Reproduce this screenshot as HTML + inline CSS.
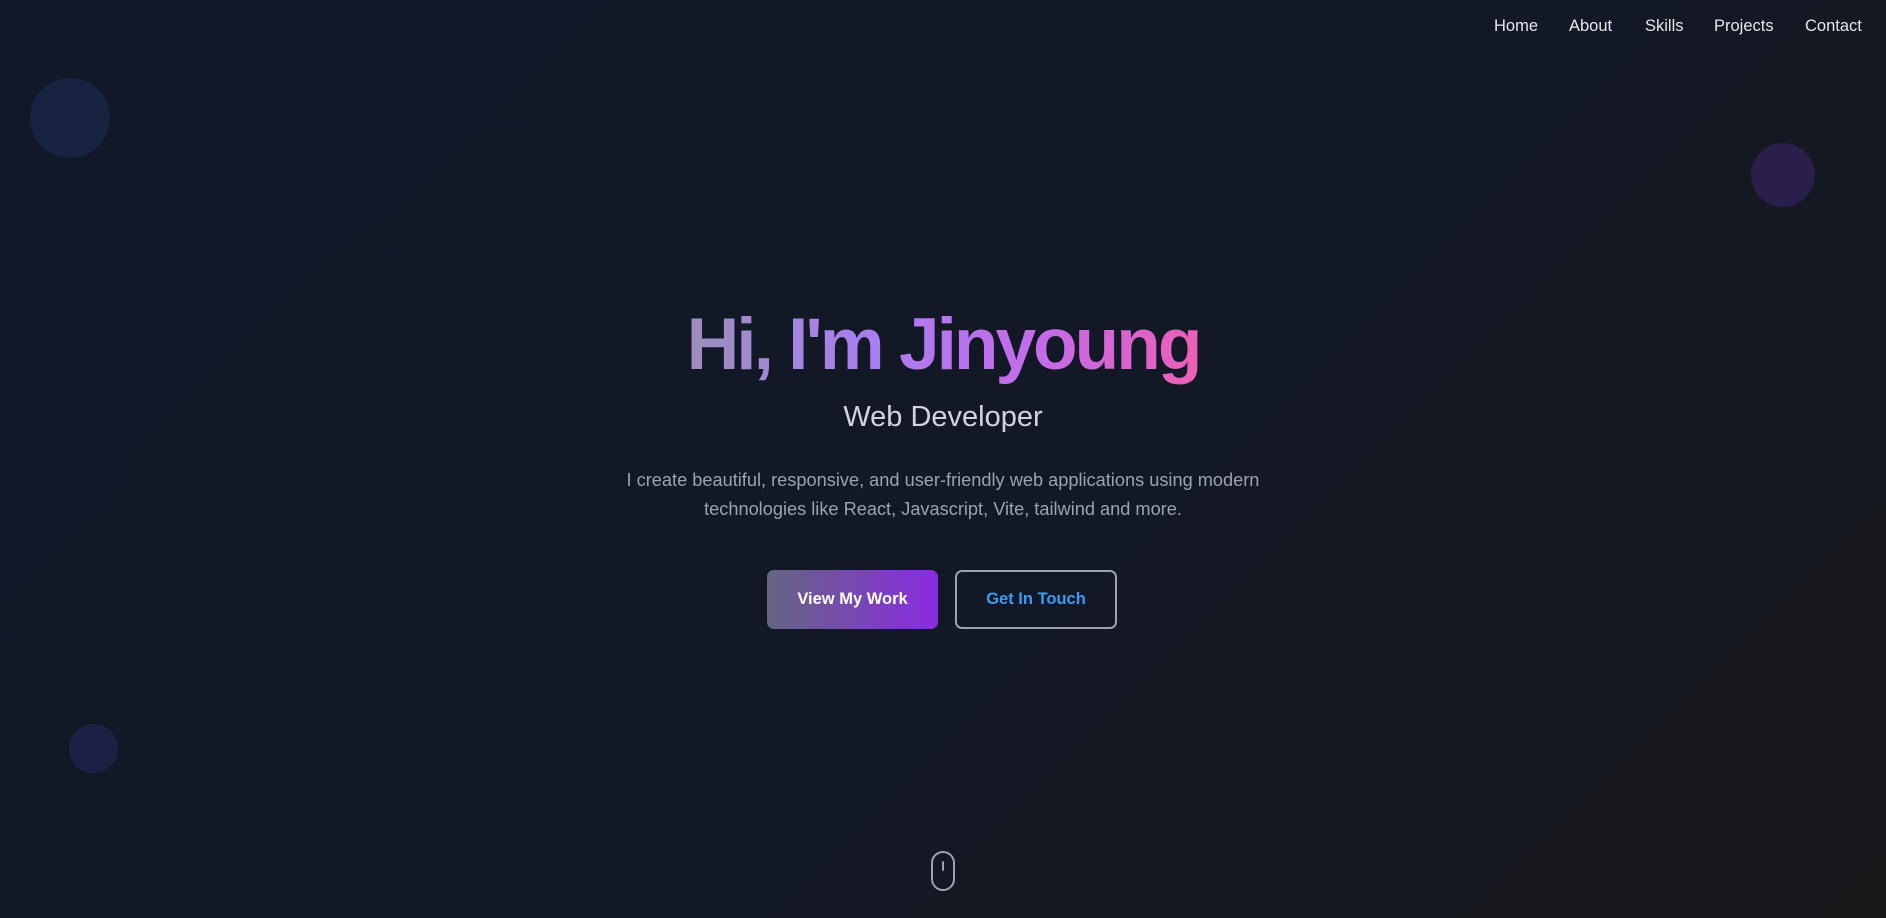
<!DOCTYPE html>
<html><head><meta charset="utf-8"><style>
html,body{margin:0;width:1886px;height:918px;overflow:hidden}
body{background:linear-gradient(135deg,#111827 0%,#121826 55%,#17171a 100%);font-family:"Liberation Sans",sans-serif;position:relative}
.nav a{position:absolute;top:17px;color:#e5e7eb;font-size:16.5px;text-decoration:none}
.c{position:absolute;border-radius:50%}
h1{position:absolute;left:0;width:1886px;top:300px;margin:0;text-align:center;font-size:73px;letter-spacing:-3px;font-weight:bold;line-height:90px}
h1 span{background:linear-gradient(90deg,#9b8fba 0%,#a97ff0 35%,#c56ae8 70%,#ec5fb5 100%);-webkit-background-clip:text;background-clip:text;color:transparent}
.sub{position:absolute;left:0;width:1886px;top:401px;text-align:center;color:#d1d5db;font-size:29px}
.p{position:absolute;left:593px;width:700px;top:466px;text-align:center;color:#9ca3af;font-size:18.2px;line-height:29px}
.b1{position:absolute;left:767px;top:570px;width:171px;height:59px;border-radius:7px;background:linear-gradient(90deg,#646681,#8a2be2);color:#fff;font-weight:bold;font-size:16.5px;text-align:center;line-height:59px}
.b2{position:absolute;left:955px;top:570px;width:158px;height:55px;border:2px solid #9ca3af;border-radius:7px;color:#3b9cf6;font-weight:bold;font-size:16.5px;text-align:center;line-height:55px}
.m{position:absolute;left:931px;top:851px;width:20px;height:36px;border:2px solid #9ca3af;border-radius:12px}
.m i{position:absolute;left:9px;top:8px;width:2px;height:10px;background:#9ca3af;border-radius:1px}
</style></head><body>
<div class="nav"><a style="left:1494px">Home</a><a style="left:1569px">About</a><a style="left:1645px">Skills</a><a style="left:1714px">Projects</a><a style="left:1805px">Contact</a></div>
<div class="c" style="left:30px;top:78px;width:80px;height:80px;background:#172341"></div>
<div class="c" style="left:1751px;top:143px;width:64px;height:64px;background:#2a1f4a"></div>
<div class="c" style="left:69px;top:724px;width:49px;height:49px;background:#1d1f45"></div>
<h1><span>Hi, I'm Jinyoung</span></h1>
<div class="sub">Web Developer</div>
<div class="p">I create beautiful, responsive, and user-friendly web applications using modern technologies like React, Javascript, Vite, tailwind and more.</div>
<div class="b1">View My Work</div>
<div class="b2">Get In Touch</div>
<div class="m"><i></i></div>
</body></html>
